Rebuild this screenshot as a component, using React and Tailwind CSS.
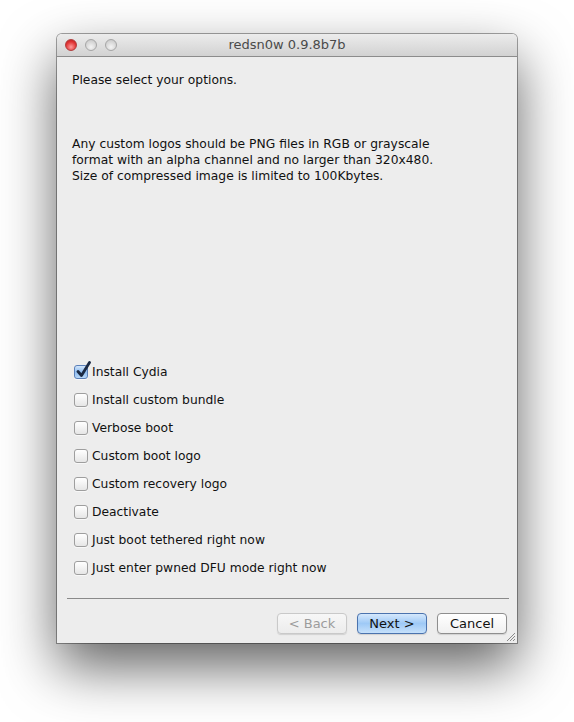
import { useState } from "react";

const options = [
    "Install Cydia",
    "Install custom bundle",
    "Verbose boot",
    "Custom boot logo",
    "Custom recovery logo",
    "Deactivate",
    "Just boot tethered right now",
    "Just enter pwned DFU mode right now",
];

function Checkbox({ checked }) {
    if (checked) {
        return (
            <span className="relative block w-[14px] h-[14px] rounded-[3px] border border-[#5a7fb8] bg-gradient-to-b from-[#d3e6fb] via-[#8fbdf0] to-[#b7d7f8] shadow-[0_1px_0_rgba(255,255,255,0.6)]">
                <svg className="absolute -top-[5px] left-[1px]" width="16" height="17" viewBox="0 0 16 17">
                    <path d="M2 10.5 L5.5 14.5 L13.5 1.5" fill="none" stroke="#1b2a44" strokeWidth="2.8" strokeLinecap="round" strokeLinejoin="round" />
                </svg>
            </span>
        );
    }
    return (
        <span className="block w-[14px] h-[14px] rounded-[3px] border border-[#9e9e9e] bg-gradient-to-b from-[#ffffff] to-[#e6e6e6] shadow-[0_1px_0_rgba(255,255,255,0.6)]" />
    );
}

function Button({ children, variant }) {
    const styles = {
        disabled: "border-[#c9c9c9] text-[#9c9c9c] bg-gradient-to-b from-[#f7f7f7] to-[#ececec]",
        primary: "border-[#4b73ae] text-[#111] bg-gradient-to-b from-[#d5e8fc] via-[#9ec9f6] to-[#c6e1fb]",
        normal: "border-[#8e8e8e] text-[#111] bg-gradient-to-b from-[#ffffff] to-[#f0f0f0]",
    };
    return (
        <button className={`w-[70px] h-[21px] rounded-[4px] border text-[13px] leading-none shadow-[0_1px_1px_rgba(0,0,0,0.12)] ${styles[variant]}`}>
            {children}
        </button>
    );
}

export default function App() {
    const [checked] = useState([true, false, false, false, false, false, false, false]);
    return (
        <div className="min-h-[722px] bg-white pl-[57px] pt-[34px] font-['DejaVu_Sans',sans-serif]">
            <div className="relative w-[460px] h-[609px] flex flex-col rounded-t-[5px] shadow-[0_24px_55px_rgba(0,0,0,0.62),0_0_0_1px_rgba(0,0,0,0.35)]">
                <div className="relative h-[23px] flex items-center justify-center rounded-t-[5px] bg-gradient-to-b from-[#ececec] to-[#d2d2d2] border-b border-[#8c8c8c]">
                    <div className="absolute left-[8px] top-[5px] flex gap-[8px]">
                        <span className="block w-[12px] h-[12px] rounded-full border border-[#b13c3c] bg-[radial-gradient(circle_at_50%_70%,#ff9c9c,#e03333_60%,#b51c1c)]" />
                        <span className="block w-[12px] h-[12px] rounded-full border border-[#a6a6a6] bg-[radial-gradient(circle_at_50%_70%,#f4f4f4,#d6d6d6_60%,#c2c2c2)]" />
                        <span className="block w-[12px] h-[12px] rounded-full border border-[#a6a6a6] bg-[radial-gradient(circle_at_50%_70%,#f4f4f4,#d6d6d6_60%,#c2c2c2)]" />
                    </div>
                    <span className="text-[13px] text-[#4a4a4a]">redsn0w 0.9.8b7b</span>
                </div>
                <div className="relative flex-1 flex flex-col bg-[#ededed] pt-[15px] pb-[8px] text-[12.3px] leading-[16px] text-[#111]">
                    <p className="pl-[15px]">Please select your options.</p>
                    <p className="pl-[15px] mt-[48px]">
                        Any custom logos should be PNG files in RGB or grayscale<br />
                        format with an alpha channel and no larger than 320x480.<br />
                        Size of compressed image is limited to 100Kbytes.
                    </p>
                    <div className="mt-[174px] flex flex-col">
                        {options.map((label, i) => (
                            <label key={i} className="h-[28px] flex items-center pl-[17px] gap-[4px]">
                                <Checkbox checked={checked[i]} />
                                <span>{label}</span>
                            </label>
                        ))}
                    </div>
                    <div className="mt-[16px] ml-[10px] mr-[8px] h-px bg-[#8a8a8a]" />
                    <div className="mt-[14px] flex justify-end gap-[10px] pr-[10px]">
                        <Button variant="disabled">&lt; Back</Button>
                        <Button variant="primary">Next &gt;</Button>
                        <Button variant="normal">Cancel</Button>
                    </div>
                    <svg className="absolute right-[1px] bottom-[1px]" width="11" height="11" viewBox="0 0 11 11">
                        <path d="M10 2 L2 10 M10 5 L5 10 M10 8 L8 10" stroke="#8a8a8a" strokeWidth="1" />
                    </svg>
                </div>
            </div>
        </div>
    );
}
